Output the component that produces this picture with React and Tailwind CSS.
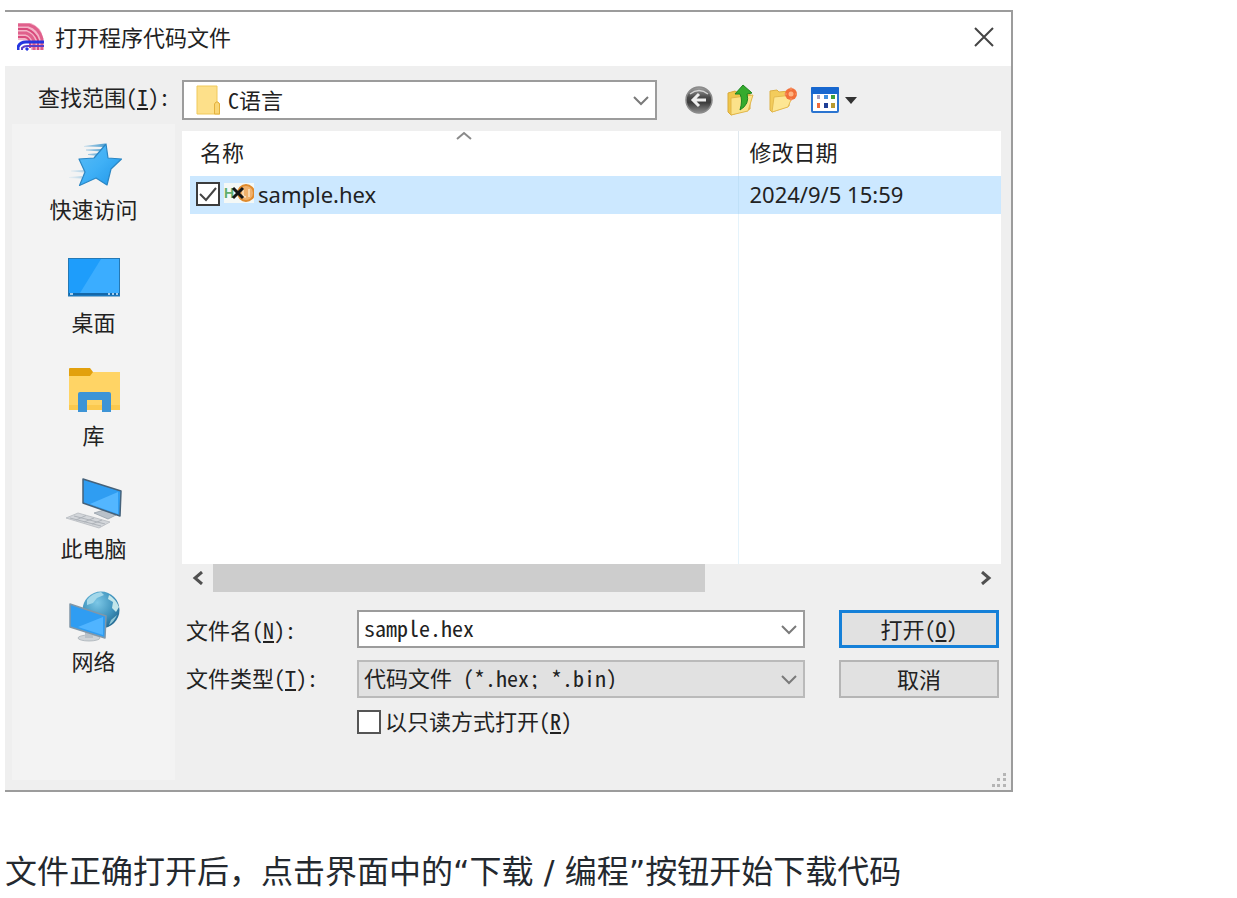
import React, { useState } from 'react';

const UI_FONT = "font-['Noto_Sans','Noto_Sans_CJK_SC',sans-serif]";
const MONO_FONT = "font-['Noto_Sans_Mono_CJK_SC','Noto_Sans_CJK_SC',monospace]";
const TEXT_FONT = "font-['DejaVu_Sans','Noto_Sans_CJK_SC',sans-serif]";

const AppLogo = () => (
  <svg className="w-7 h-7" viewBox="0 0 28 28" fill="none">
    <path d="M1 0H14Q24 4 26 14V27H14V20Q11 17 1 17Z" fill="#f3b4c8" />
    <path d="M1 2H12Q22 5 25 16V27" stroke="#e0608c" strokeWidth="3" />
    <path d="M1 6H10Q18 9 21 17V27" stroke="#d94a7c" strokeWidth="2" />
    <path d="M1 10H9Q15 12 17 18V27" stroke="#e0608c" strokeWidth="3" />
    <path d="M1 14H8Q12 15 13 19V25" stroke="#d94a7c" strokeWidth="2" />
    <path d="M1 27V24Q3 19 9 19H27" stroke="#2436e0" strokeWidth="3" />
    <path d="M5 27V25Q7 23 10 23H27" stroke="#5b3fc8" strokeWidth="2" />
    <path d="M9 27L11 25" stroke="#2436e0" strokeWidth="3" />
  </svg>
);

const StarIcon = () => (
  <svg className="w-14 h-[52px]" viewBox="0 0 56 52">
    <defs>
      <linearGradient id="star" x1="0" y1="0" x2="1" y2="1">
        <stop offset="0" stopColor="#5bbcf5" />
        <stop offset="0.5" stopColor="#3fb0f6" />
        <stop offset="1" stopColor="#1f95e8" />
      </linearGradient>
      <linearGradient id="trail" x1="0" y1="0" x2="1" y2="0">
        <stop offset="0" stopColor="#7db9de" stopOpacity="0.1" />
        <stop offset="1" stopColor="#4f9fd0" />
      </linearGradient>
    </defs>
    <path d="M18 7L39 4.500V8L18 7.500ZM20 10.500L36 10V12.500L20 11.500ZM22 15L34 14V17L22 16ZM5 31.500L18 31V33.500L5 32.500ZM3 38L16 37V39.500L3 39Z" fill="url(#trail)" />
    <path d="M40 5L42 19L55.500 20L45 30L41 46L30 39L13.500 46.500L19 33L13 20L28 19Z" fill="url(#star)" stroke="#2a86c4" strokeWidth="1.200" strokeLinejoin="round" />
  </svg>
);

const DesktopIcon = () => (
  <svg className="w-14 h-[52px]" viewBox="0 0 56 52">
    <rect x="2.500" y="6.500" width="51" height="37.500" fill="#1e9dfb" stroke="#2478b4" />
    <path d="M35 7H53V41H14Z" fill="#3badff" />
    <rect x="3" y="41" width="50" height="2.500" fill="#1467a8" />
    <path d="M4 42H7M42 42H44M46 42H48M50 42H52" stroke="#d9efff" strokeWidth="1.500" />
  </svg>
);

const LibraryIcon = () => (
  <svg className="w-14 h-[52px]" viewBox="0 0 56 52">
    <path d="M3 7H54V45H3Z" fill="#ffd465" />
    <path d="M3 40H54V45H3Z" fill="#fbc94e" />
    <path d="M3 4Q3 3 4 3H24L27 7L24 11H3Z" fill="#e2a00d" />
    <path d="M12 29Q12 27 14 27H43Q45 27 45 29V47H36V35H21V47H12Z" fill="#3d94d6" />
  </svg>
);

const ComputerIcon = () => (
  <svg className="w-14 h-[52px]" viewBox="0 0 56 52">
    <path d="M28 35L38 32L50 37L42 41Z" fill="#b9c1c9" stroke="#98a1aa" strokeWidth="0.800" />
    <path d="M17 1L55 13L54 38L17 25Z" fill="#2f9df2" stroke="#46627a" strokeWidth="1.500" strokeLinejoin="round" />
    <path d="M52 14V36L24 26Z" fill="#53b6ff" />
    <path d="M0 40L12 35L44 44L33 50Z" fill="#d3d6da" stroke="#b6babf" strokeWidth="0.800" />
    <path d="M4 40L35 48M8 38L39 46M10 42L20 37.500M18 44L28 40M26 46L36 42" stroke="#aeb3b9" strokeWidth="1" />
  </svg>
);

const NetworkIcon = () => (
  <svg className="w-14 h-[52px]" viewBox="0 0 56 52">
    <defs>
      <radialGradient id="globe" cx="0.400" cy="0.300" r="0.750">
        <stop offset="0" stopColor="#7cc7e6" />
        <stop offset="0.600" stopColor="#3f93bd" />
        <stop offset="1" stopColor="#22668e" />
      </radialGradient>
    </defs>
    <circle cx="35" cy="19" r="18.500" fill="url(#globe)" />
    <path d="M21 9Q26 2 35 1L38 4L31 7L27 12L21 14Z" fill="#a4d8ea" />
    <path d="M43 4Q50 8 53 16L50 21L46 17L47 11L42 8Z" fill="#c3e6ea" />
    <path d="M45 29L51 24Q48 31 43 34Z" fill="#8fc6d6" />
    <ellipse cx="23" cy="47" rx="11" ry="3" fill="#cfd4d8" stroke="#aab1b7" strokeWidth="0.800" />
    <path d="M19 40H27V47H19Z" fill="#b9c1c8" />
    <path d="M4 13L40 25L39 47L4 36Z" fill="#2f9df2" stroke="#8197a8" strokeWidth="1.500" strokeLinejoin="round" />
    <path d="M37 26V44L12 36Z" fill="#50b4ff" />
  </svg>
);

const FolderIcon = () => (
  <svg className="w-6 h-[30px]" viewBox="0 0 24 30">
    <path d="M1 1H21V17L24 19V29H1Z" fill="#fde08a" stroke="#f0c95a" />
    <path d="M18.500 29V19L20 17H22L23.500 19V29Z" fill="#f9d675" stroke="#e3b13d" />
  </svg>
);

const BackIcon = () => (
  <svg className="w-7 h-7" viewBox="0 0 28 28">
    <defs>
      <linearGradient id="back" x1="0" y1="0" x2="0" y2="1">
        <stop offset="0" stopColor="#a5a5a5" />
        <stop offset="0.400" stopColor="#4a4a4a" />
        <stop offset="0.600" stopColor="#3c3c3c" />
        <stop offset="1" stopColor="#8f8f8f" />
      </linearGradient>
    </defs>
    <circle cx="14" cy="14" r="13" fill="url(#back)" stroke="#8b8b8b" strokeWidth="1.500" />
    <path d="M5 8Q14 1 23 8" stroke="#d4d4d4" strokeWidth="1.500" fill="none" />
    <path d="M21 14H8M14 8L8 14L14 20" stroke="#eeeeee" strokeWidth="3" fill="none" />
  </svg>
);

const UpIcon = () => (
  <svg className="w-7 h-8" viewBox="0 0 28 32">
    <path d="M1 9L8 7L11 9L23 7V25L4 31L1 28Z" fill="#efc64c" stroke="#d9a93a" />
    <path d="M4 14L26 11L21 27L4 31Z" fill="#fbe28a" stroke="#e2b74b" />
    <path d="M8 10L16 1L25 9L20 10Q23 20 13 26Q16 16 13 10Z" fill="#35ab2d" stroke="#1d8420" />
  </svg>
);

const NewFolderIcon = () => (
  <svg className="w-7 h-7" viewBox="0 0 28 28">
    <path d="M1 5L8 4L10 6L20 5V20L3 26L1 24Z" fill="#f3cc5c" stroke="#ddb045" />
    <path d="M5 11L24 9L19 21L3 26Z" fill="#fde694" stroke="#e5bb50" />
    <circle cx="22" cy="8" r="6" fill="#f2703a" />
    <circle cx="22" cy="8" r="2.500" fill="#ffb483" />
    <path d="M22 1V4M22 12V15M15 8H18M26 8H28" stroke="#f79a6c" />
  </svg>
);

const ViewIcon = () => (
  <svg className="w-7 h-7" viewBox="0 0 28 28">
    <rect x="1" y="2" width="26" height="24" rx="1" fill="#ffffff" stroke="#2b74d0" strokeWidth="2" />
    <rect x="0" y="1" width="28" height="7" rx="1" fill="#1767cf" />
    <rect x="6" y="9" width="3" height="4" fill="#a8a0c0" />
    <rect x="13" y="9" width="4" height="4" fill="#3f8fe0" />
    <rect x="20" y="9" width="4" height="4" fill="#3fa03c" />
    <rect x="6" y="17" width="3" height="5" fill="#ee6a3a" />
    <rect x="13" y="17" width="4" height="5" fill="#1f3f96" />
    <rect x="20" y="17" width="4" height="5" fill="#b99a2e" />
  </svg>
);

const HexFileIcon = () => (
  <svg className="w-[30px] h-6" viewBox="0 0 30 24">
    <rect x="0" y="1" width="30" height="20" fill="#f4f8f6" />
    <text x="0" y="16" fontFamily="Liberation Sans" fontSize="14" fontWeight="bold" fill="#5fae6c">H</text>
    <circle cx="22" cy="11" r="8" fill="#f0b06a" stroke="#e08a2c" strokeWidth="2" />
    <path d="M19 7V12Q19 15 22 15M25 7V15" stroke="#fbe3c4" strokeWidth="1.500" fill="none" />
    <path d="M9 6L19 16M19 6L9 16" stroke="#151515" strokeWidth="3" />
  </svg>
);

const Chevron = () => (
  <svg className="w-4 h-4" viewBox="0 0 16 16" fill="none">
    <path d="M1 5L8 12L15 5" stroke="#7a7a7a" strokeWidth="2" />
  </svg>
);

const SizeGrip = () => (
  <svg className="w-4 h-4" viewBox="0 0 16 16" fill="#b5b5b5">
    <path d="M12 1h3v3h-3zM6 6h3v3h-3zM12 6h3v3h-3zM1 12h3v3h-3zM6 12h3v3h-3zM12 12h3v3h-3z" />
  </svg>
);

const PLACES = [
  { name: '快速访问', Icon: StarIcon },
  { name: '桌面', Icon: DesktopIcon },
  { name: '库', Icon: LibraryIcon },
  { name: '此电脑', Icon: ComputerIcon },
  { name: '网络', Icon: NetworkIcon },
];

const FileDialog = () => {
  const [fileName, setFileName] = useState('sample.hex');
  const [checked, setChecked] = useState(true);
  const [readOnly, setReadOnly] = useState(false);

  return (
    <div className={`relative w-full max-w-[1008px] border-y-2 border-r-2 border-[#9c9c9c] bg-[#efefef] text-[22px] leading-6 text-[#222222] ${UI_FONT}`}>
      {/* Title bar */}
      <header className="flex h-[54px] items-center bg-white pb-1 pl-3 pr-[17px]">
        <AppLogo />
        <h1 className="ml-2.5 flex-1">打开程序代码文件</h1>
        <button type="button" aria-label="关闭">
          <svg className="w-5 h-5" viewBox="0 0 20 20" fill="none">
            <path d="M1 1L19 19M19 1L1 19" stroke="#444444" strokeWidth="2" />
          </svg>
        </button>
      </header>

      {/* Look-in bar */}
      <div className="flex items-center pb-1 pl-[33px] pr-[154px] pt-3.5">
        <label htmlFor="look-in" className={`w-36 shrink-0 pb-2 ${MONO_FONT}`}>
          查找范围(<span className="underline">I</span>):
        </label>
        <div className="relative flex-1">
          <select id="look-in" className={`h-10 w-full appearance-none border-2 border-[#9c9c9c] bg-white pb-0.5 pl-11 ${MONO_FONT}`}>
            <option>C语言</option>
          </select>
          <span className="pointer-events-none absolute inset-y-0 left-3.5 flex items-center"><FolderIcon /></span>
          <span className="pointer-events-none absolute inset-y-0 right-2 flex items-center"><Chevron /></span>
        </div>
        <div className="ml-7 flex items-center gap-3.5">
          <button type="button" aria-label="后退"><BackIcon /></button>
          <button type="button" aria-label="向上一级"><UpIcon /></button>
          <button type="button" aria-label="新建文件夹"><NewFolderIcon /></button>
          <button type="button" aria-label="查看" className="flex items-center gap-1.5">
            <ViewIcon />
            <svg className="w-3 h-2" viewBox="0 0 12 8"><path d="M0 1H12L6 8Z" fill="#333333" /></svg>
          </button>
        </div>
      </div>

      <div className="flex gap-[7px] pb-2.5 pl-[7px] pr-2.5">
        {/* Places */}
        <nav className="flex w-[163px] shrink-0 flex-col gap-[31px] bg-[#f3f3f3] pb-[107px] pt-[15px]">
          {PLACES.map(({ name, Icon }) => (
            <button key={name} type="button" className="flex flex-col items-center gap-1.5">
              <Icon />
              <span>{name}</span>
            </button>
          ))}
        </nav>

        <main className="min-w-0 flex-1 pt-[7px]">
          {/* File list */}
          <div className="bg-white pl-2">
            <table className="w-full table-fixed">
              <thead>
                <tr className="h-[45px] text-left">
                  <th className="relative w-[548px] pb-1 pl-2.5 font-normal">
                    名称
                    <span className="pointer-events-none absolute inset-x-0 top-0 flex justify-center">
                      <svg className="w-4 h-2.5" viewBox="0 0 16 10" fill="none">
                        <path d="M1 8L8 2L15 8" stroke="#8a8a8a" strokeWidth="2" />
                      </svg>
                    </span>
                  </th>
                  <th className="border-l border-[#e0e8ee] pb-1 pl-[11px] font-normal">修改日期</th>
                </tr>
              </thead>
              <tbody>
                <tr className="h-[38px] bg-[#cce8ff]">
                  <td className="pb-0.5">
                    <label className="flex items-center pl-1.5">
                      <span className="relative flex">
                        <input
                          type="checkbox"
                          checked={checked}
                          onChange={(e) => setChecked(e.target.checked)}
                          className="h-6 w-6 appearance-none border-2 border-[#3c3c3c] bg-white"
                        />
                        {checked && (
                          <svg className="pointer-events-none absolute inset-0 w-6 h-6" viewBox="0 0 24 24" fill="none">
                            <path d="M4 12L10 18L20 6" stroke="#444444" strokeWidth="2" />
                          </svg>
                        )}
                      </span>
                      <span className="mx-1"><HexFileIcon /></span>
                      sample.hex
                    </label>
                  </td>
                  <td className="border-l border-[#bfe0f8] pb-0.5 pl-[11px]">2024/9/5 15:59</td>
                </tr>
                <tr className="h-[350px]">
                  <td></td>
                  <td className="border-l border-[#e5f3fb]"></td>
                </tr>
              </tbody>
            </table>
          </div>

          {/* Horizontal scrollbar */}
          <div className="flex h-7 items-stretch">
            <button type="button" aria-label="向左滚动" className="flex w-[31px] items-center justify-center">
              <svg className="w-3 h-3.5" viewBox="0 0 12 14" fill="none">
                <path d="M10 1L3 7L10 13" stroke="#505050" strokeWidth="3" />
              </svg>
            </button>
            <div className="flex-1">
              <div className="h-full w-[65%] bg-[#cdcdcd]"></div>
            </div>
            <button type="button" aria-label="向右滚动" className="flex w-[31px] items-center justify-center">
              <svg className="w-3 h-3.5" viewBox="0 0 12 14" fill="none">
                <path d="M2 1L9 7L2 13" stroke="#505050" strokeWidth="3" />
              </svg>
            </button>
          </div>

          {/* File name, type and actions */}
          <form className={`mt-[18px] flex flex-col gap-3 pl-1 pr-0.5 ${MONO_FONT}`} onSubmit={(e) => e.preventDefault()}>
            <div className="flex items-center">
              <label htmlFor="file-name" className="w-[171px]">
                文件名(<span className="underline">N</span>):
              </label>
              <div className="relative flex-1">
                <input
                  id="file-name"
                  type="text"
                  value={fileName}
                  onChange={(e) => setFileName(e.target.value)}
                  className="h-[38px] w-full border-2 border-[#9c9c9c] bg-white pb-1 pl-[5px]"
                />
                <button type="button" aria-label="历史文件" className="absolute inset-y-0 right-2"><Chevron /></button>
              </div>
              <button type="submit" className="ml-[34px] h-[38px] w-40 border-[3px] border-[#1580d8] bg-[#e1e1e1] pb-0.5">
                打开(<span className="underline">O</span>)
              </button>
            </div>
            <div className="flex items-center">
              <label htmlFor="file-type" className="w-[171px] pb-1">
                文件类型(<span className="underline">T</span>):
              </label>
              <div className="relative flex-1">
                <select id="file-type" className="h-[38px] w-full appearance-none border-2 border-[#bababa] bg-[#e1e1e1] pb-1 pl-[5px]">
                  <option>代码文件 (*.hex; *.bin)</option>
                </select>
                <span className="pointer-events-none absolute inset-y-0 right-2 flex items-center"><Chevron /></span>
              </div>
              <button type="button" className="ml-[34px] h-[38px] w-40 border-2 border-[#b5b5b5] bg-[#e1e1e1] pb-0.5">取消</button>
            </div>
            <label className="ml-[171px] flex items-center gap-1">
              <input
                type="checkbox"
                checked={readOnly}
                onChange={(e) => setReadOnly(e.target.checked)}
                className="h-6 w-6 appearance-none border-2 border-[#555555] bg-white checked:bg-[#555555]"
              />
              <span className="-mt-1">以只读方式打开(<span className="underline">R</span>)</span>
            </label>
          </form>
        </main>
      </div>

      <span className="pointer-events-none absolute bottom-0.5 right-1"><SizeGrip /></span>
    </div>
  );
};

const App = () => {
  return (
    <div className="bg-white pl-[5px] pt-2.5">
      <FileDialog />
      <p className={`mt-14 text-[32px] leading-[48px] text-[#24292f] ${TEXT_FONT}`}>
        文件正确打开后，点击界面中的“下载 / 编程”按钮开始下载代码
      </p>
    </div>
  );
};

export default App;
